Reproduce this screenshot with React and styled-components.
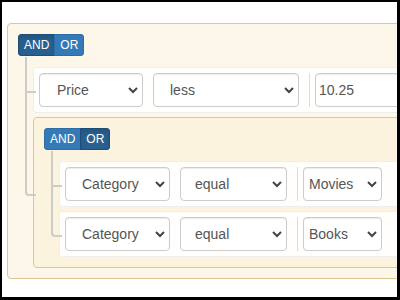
import React from "react";
import styled, { createGlobalStyle } from "styled-components";

const GlobalStyle = createGlobalStyle`
  html, body { margin: 0; padding: 0; background: #fff; }
  body { font-family: "Liberation Sans", Arial, sans-serif; }
  * { box-sizing: border-box; }
`;

const Frame = styled.div`
  width: 400px;
  height: 300px;
  overflow: hidden;
  border-style: solid;
  border-color: #000;
  border-width: 2px 3px 3px 2px;
  background: #fff;
  padding: 21px 0 0 5px;
`;

const Group = styled.div`
  position: relative;
  width: ${(p) => (p.$width ? `${p.$width}px` : "auto")};
  border: 1px solid #dcc896;
  border-radius: 4px;
  background: rgba(250, 240, 210, 0.5);
  padding: 10px 10px 10px 10px;
`;

const GroupHeader = styled.div`
  display: flex;
  margin-bottom: 11px;
`;

const Toggle = styled.button`
  font: 12px/18px "Liberation Sans", Arial, sans-serif;
  color: #fff;
  margin: 0;
  padding: 1px 5px;
  border: 1px solid ${(p) => (p.$active ? "#204d74" : "#2e6da4")};
  background: ${(p) => (p.$active ? "#286090" : "#337ab7")};
  box-shadow: ${(p) => (p.$active ? "inset 0 3px 5px rgba(0,0,0,.125)" : "none")};
  &:first-child { border-radius: 3px 0 0 3px; }
  &:last-child { border-radius: 0 3px 3px 0; margin-left: -1px; }
`;

const RulesList = styled.div`
  display: flex;
  flex-direction: column;
  gap: 4px;
  padding-left: 15px;

  & > * { position: relative; }
  & > *::before,
  & > *::after {
    content: "";
    position: absolute;
    left: -9px;
    width: 9px;
    border-color: #ccc;
    border-style: solid;
  }
  & > *::before {
    top: -4px;
    height: calc(50% + 5px);
    border-width: 0 0 2px 2px;
  }
  & > *::after {
    top: calc(50% + 1px);
    height: calc(50% + 3px);
    border-width: 0 0 0 2px;
  }
  & > *:first-child::before {
    top: -11px;
    height: calc(50% + 12px);
  }
  & > *:last-child::before { border-radius: 0 0 0 4px; }
  & > *:last-child::after { display: none; }
`;

const Rule = styled.div`
  display: flex;
  align-items: center;
  border: 1px solid #eee;
  border-radius: 3px;
  background: rgba(255, 255, 255, 0.9);
  padding: 5px;
`;

const SelectWrap = styled.div`
  position: relative;
  flex: none;
  width: ${(p) => p.$width}px;
  & + & { margin-left: 10px; }
`;

const Select = styled.select`
  appearance: none;
  -webkit-appearance: none;
  display: block;
  width: 100%;
  height: 34px;
  margin: 0;
  padding: 0 20px 0 ${(p) => p.$pad}px;
  font: 14px "Liberation Sans", Arial, sans-serif;
  color: #555;
  background: #fff;
  border: 1px solid #ccc;
  border-radius: 4px;
  box-shadow: inset 0 1px 1px rgba(0, 0, 0, 0.075);
  outline: none;
`;

const Chevron = styled.svg`
  position: absolute;
  right: 5px;
  top: 50%;
  margin-top: -3px;
  pointer-events: none;
`;

const ValueContainer = styled.div`
  flex: none;
  display: flex;
  margin-left: 10px;
  padding-left: 5px;
  border-left: 1px solid #ddd;
`;

const Input = styled.input`
  width: ${(p) => p.$width}px;
  height: 34px;
  margin: 0;
  padding: 0 3px;
  font: 14px "Liberation Sans", Arial, sans-serif;
  color: #555;
  background: #fff;
  border: 1px solid #ccc;
  border-radius: 4px;
  box-shadow: inset 0 1px 1px rgba(0, 0, 0, 0.075);
  outline: none;
`;

function Dropdown({ width, pad, value, options }) {
  return (
    <SelectWrap $width={width}>
      <Select $pad={pad} defaultValue={value}>
        {options.map((o) => (
          <option key={o} value={o}>{o}</option>
        ))}
      </Select>
      <Chevron width="10" height="7" viewBox="0 0 10 7">
        <polyline points="1,1 5,5 9,1" fill="none" stroke="#444" strokeWidth="2" />
      </Chevron>
    </SelectWrap>
  );
}

function Conditions({ active }) {
  return (
    <GroupHeader>
      <Toggle $active={active === "AND"}>AND</Toggle>
      <Toggle $active={active === "OR"}>OR</Toggle>
    </GroupHeader>
  );
}

const filters = ["Price", "Category", "Name"];
const operators = ["equal", "not equal", "less", "greater"];

export default function App() {
  return (
    <>
      <GlobalStyle />
      <Frame>
        <Group $width={480}>
          <Conditions active="AND" />
          <RulesList>
            <Rule>
              <Dropdown width={104} pad={17} value="Price" options={filters} />
              <Dropdown width={146} pad={16} value="less" options={operators} />
              <ValueContainer>
                <Input $width={140} defaultValue="10.25" />
              </ValueContainer>
            </Rule>
            <Group>
              <Conditions active="OR" />
              <RulesList>
                <Rule>
                  <Dropdown width={105} pad={16} value="Category" options={filters} />
                  <Dropdown width={107} pad={14} value="equal" options={operators} />
                  <ValueContainer>
                    <Dropdown width={79} pad={5} value="Movies" options={["Movies", "Books", "Music"]} />
                  </ValueContainer>
                </Rule>
                <Rule>
                  <Dropdown width={105} pad={16} value="Category" options={filters} />
                  <Dropdown width={107} pad={14} value="equal" options={operators} />
                  <ValueContainer>
                    <Dropdown width={79} pad={5} value="Books" options={["Movies", "Books", "Music"]} />
                  </ValueContainer>
                </Rule>
              </RulesList>
            </Group>
          </RulesList>
        </Group>
      </Frame>
    </>
  );
}
